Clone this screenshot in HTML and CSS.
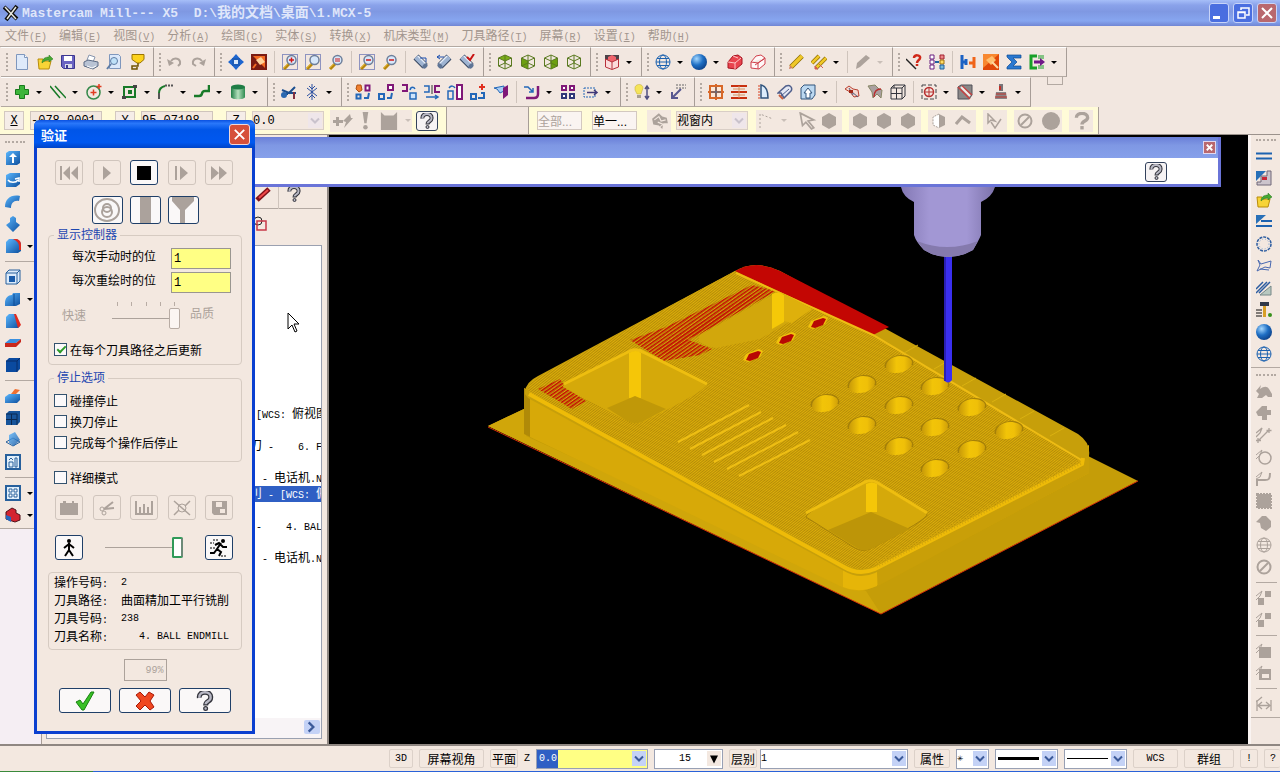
FILE: index.html
```html
<!DOCTYPE html>
<html lang="zh-CN">
<head>
    <meta charset="UTF-8">
    <meta name="viewport" content="width=device-width, initial-scale=1.0">
    <title>Mastercam Mill--- X5</title>
    <link rel="stylesheet" href="styles.css">
</head>
<body>
    <!-- icon sprite -->
    <svg class="sprite" aria-hidden="true">
        <defs>
            <linearGradient id="g-blue" x1="0" y1="0" x2="1" y2="1"><stop offset="0" stop-color="#5cb8ff"/><stop offset="1" stop-color="#0d4f9e"/></linearGradient>
            <linearGradient id="g-green" x1="0" x2="1"><stop offset="0" stop-color="#1f7d45"/><stop offset="0.5" stop-color="#b5e0bd"/><stop offset="1" stop-color="#2e8b50"/></linearGradient>
            <radialGradient id="g-ball" cx="0.35" cy="0.3" r="0.8"><stop offset="0" stop-color="#a5d8ff"/><stop offset="0.5" stop-color="#1f6fc4"/><stop offset="1" stop-color="#0a3a80"/></radialGradient>
            <symbol id="lens" viewBox="0 0 16 16"><path d="M2 15l5-5" stroke="#b8860b" stroke-width="3"/><path d="M1.500 14l5-5" stroke="#f0c850"/><circle cx="9.500" cy="6" r="4.500" fill="#d7e7fa" stroke="#6e7f9a" stroke-width="1.500"/></symbol>
            <symbol id="dots" viewBox="0 0 16 16"><rect x="0.500" y="0.500" width="15" height="15" fill="none" stroke="#2b3fa0" stroke-dasharray="1 1"/></symbol>
            <symbol id="tube" viewBox="0 0 16 16"><path d="M3 3l9 9" stroke="#384862" stroke-width="7"/><path d="M3 3l9 9" stroke="#9fb4d2" stroke-width="5"/><path d="M5 2l8 8" stroke="#e6eefa" stroke-width="1.500"/><ellipse cx="12" cy="12" rx="3" ry="2" transform="rotate(-45 12 12)" fill="#5f7596"/></symbol>
            <symbol id="cube" viewBox="0 0 16 16"><path d="M8 1l6.500 3v8L8 15l-6.500-3V4zM1.500 4L8 7l6.500-3M8 7v8M1.500 12L8 9l6.500 3M8 1v8" fill="none" stroke="#5a7a20"/></symbol>
            <symbol id="i-new" viewBox="0 0 16 16"><path d="M2.500 0.500h8l3 3v12h-11z" fill="#dfeafa" stroke="#7f97bd"/><path d="M10.500 0.500v3h3" fill="#fff" stroke="#7f97bd"/></symbol>
            <symbol id="i-open" viewBox="0 0 16 16"><path d="M1 5h5l1 2h7l-2 8H2z" fill="#f7d437" stroke="#b98c0a"/><path d="M5 9c0-4 3-6 7-6V1l4 4-4 3V6c-3 0-5 1-7 3z" fill="#46a832" stroke="#2b7220" stroke-width="0.500"/></symbol>
            <symbol id="i-save" viewBox="0 0 16 16"><path d="M1.500 1.500h13v13h-11l-2-2z" fill="#6a63c2" stroke="#3c3790"/><path d="M4 2h8v5H4z" fill="#fff"/><path d="M5 10h7v4H5z" fill="#dcdcea"/><path d="M6 11h2v3H6z" fill="#3c3790"/></symbol>
            <symbol id="i-print" viewBox="0 0 16 16"><path d="M4 6l2-5 6 2-2 5z" fill="#fff" stroke="#8795ad"/><path d="M1 8l4-2 10 2v4l-5 3-9-3z" fill="#b9c3d4" stroke="#5c6b85"/><path d="M4 12l5 2 4-2" stroke="#fff" fill="none"/></symbol>
            <symbol id="i-preview" viewBox="0 0 16 16"><path d="M3.500 0.500h9l2 2v12h-11z" fill="#dbe8fa" stroke="#7f97bd"/><circle cx="8" cy="7" r="3.500" fill="#bfe1f8" stroke="#5e7ca5"/><path d="M5 10l-4 5" stroke="#5e7ca5" stroke-width="2"/></symbol>
            <symbol id="i-cup" viewBox="0 0 16 16"><path d="M3 0.500h12v5L11 9H8L3 5.500z" fill="#fcd21c" stroke="#9a7400"/><path d="M9 9v3H3v3h5v-2" fill="none" stroke="#705400" stroke-width="1.500"/></symbol>
            <symbol id="i-undo" viewBox="0 0 16 16"><path d="M4 7c3-4 10-3 9 3l-2 2" fill="none" stroke="currentColor" stroke-width="2"/><path d="M0 5l2 7 5-3z" fill="currentColor"/></symbol>
            <symbol id="i-redo" viewBox="0 0 16 16"><path d="M12 7C9 3 2 4 3 10l3 2" fill="none" stroke="currentColor" stroke-width="2"/><path d="M16 5l-2 7-5-3z" fill="currentColor"/></symbol>
            <symbol id="i-fit" viewBox="0 0 16 16"><path d="M8 0l3.500 4h-7zM8 16l3.500-4h-7zM0 8l4-3.500v7zM16 8l-4-3.500v7z" fill="#1d66d0"/><rect x="5" y="5" width="6" height="6" fill="#d8e8fa" stroke="#1c5cb8" stroke-width="2"/></symbol>
            <symbol id="i-repaint" viewBox="0 0 16 16"><path d="M0 0h16v16H0z" fill="#7a1b12"/><path d="M2 2h12v12z" fill="#f36b23"/><path d="M5 6l5-3 4 5-5 3z" fill="#ffd39a"/><path d="M5 10l-3 4" stroke="#f36b23" stroke-width="2"/></symbol>
            <symbol id="i-zoomwin" viewBox="0 0 16 16"><use href="#dots"/><use href="#lens"/><path d="M9.500 3.500v5M7 6h5" stroke="#d01818" stroke-width="1.500"/></symbol>
            <symbol id="i-zoomtgt" viewBox="0 0 16 16"><use href="#dots"/><use href="#lens"/></symbol>
            <symbol id="i-zoomeq" viewBox="0 0 16 16"><use href="#lens"/><path d="M7 5h5M7 7h5" stroke="#d01818"/></symbol>
            <symbol id="i-zoomoutwin" viewBox="0 0 16 16"><use href="#dots"/><use href="#lens"/><path d="M7 6h5" stroke="#d01818" stroke-width="1.500"/></symbol>
            <symbol id="i-zoomout" viewBox="0 0 16 16"><use href="#lens"/><path d="M7 6h5" stroke="#d01818" stroke-width="1.500"/></symbol>
            <symbol id="i-tube1" viewBox="0 0 16 16"><use href="#tube"/><path d="M7 4h6v4" fill="none" stroke="#1b4fb0"/></symbol>
            <symbol id="i-tube2" viewBox="0 0 16 16"><g transform="matrix(-1 0 0 1 16 0)"><use href="#tube"/></g><path d="M1 3h7M1 3l3-2M1 3l3 2" fill="none" stroke="#1b4fb0"/></symbol>
            <symbol id="i-tube3" viewBox="0 0 16 16"><use href="#tube"/><path d="M8 3l3 3 4-6" fill="none" stroke="#c81414" stroke-width="2"/></symbol>
            <symbol id="i-cubetop" viewBox="0 0 16 16"><path d="M8 1l6.500 3L8 7 1.500 4z" fill="#7cae1a"/><use href="#cube"/></symbol>
            <symbol id="i-cubeleft" viewBox="0 0 16 16"><path d="M1.500 4L8 7v8l-6.500-3z" fill="#6ca010"/><use href="#cube"/></symbol>
            <symbol id="i-cuberight" viewBox="0 0 16 16"><path d="M14.500 4L8 7v8l6.500-3z" fill="#6ca010"/><use href="#cube"/></symbol>
            <symbol id="i-redcube" viewBox="0 0 16 16"><path d="M1 1h14v4L8 8 1 5z" fill="#4c4248"/><path d="M4 3l4-2 4 2v3L8 8 4 6z" fill="#f0646c"/><path d="M1.500 5v8L8 15.500l6.500-2.500V5L8 8zM8 8v7" fill="#fbdcdc" stroke="#b8303a"/></symbol>
            <symbol id="i-globe" viewBox="0 0 16 16"><circle cx="8" cy="8" r="7" fill="none" stroke="currentColor"/><ellipse cx="8" cy="8" rx="3.500" ry="7" fill="none" stroke="currentColor"/><path d="M1 8h14M2 4.500h12M2 11.500h12" stroke="currentColor"/></symbol>
            <symbol id="i-ball" viewBox="0 0 16 16"><circle cx="8" cy="8" r="8" fill="url(#g-ball)"/></symbol>
            <symbol id="i-redsolid" viewBox="0 0 16 16"><path d="M1 8l5-6 5-1 4 3v6l-6 5-8-1z" fill="#e8444e" stroke="#a81420"/><path d="M1 8l7 1 6-5M8 9v6M6 2l5 2" fill="none" stroke="#ffc4c4"/></symbol>
            <symbol id="i-redwire" viewBox="0 0 16 16"><path d="M1 8l5-6 5-1 4 3v6l-6 5-8-1zM1 8l7 1 7-5M8 9v6M5 11l9-6" fill="#fff8f8" stroke="#d0404c"/></symbol>
            <symbol id="i-pencil" viewBox="0 0 16 16"><path d="M3 13L14 2" stroke="#8a6a00" stroke-width="5"/><path d="M3 13L14 2" stroke="#f0c828" stroke-width="3.500"/><path d="M1 15l1-4 3 3z" fill="#d08060"/></symbol>
            <symbol id="i-pencils" viewBox="0 0 16 16"><path d="M1 9l7-7M5 14l10-10" stroke="#8a6a00" stroke-width="4"/><path d="M1 9l7-7M5 14l10-10" stroke="#f0c828" stroke-width="2.500"/><path d="M4 15l0-3 3 3zM8 10l4 4" fill="#d06050" stroke="#d06050"/></symbol>
            <symbol id="i-eraser" viewBox="0 0 16 16"><path d="M1 15l4-2 10-9-4-3-9 8z" fill="currentColor"/></symbol>
            <symbol id="i-what" viewBox="0 0 16 16"><path d="M0 5l10 10" stroke="#222" stroke-width="1.500"/><path d="M8 4c0-4 7-3 6 0 0 2-3 2-3 5M11 10v2" fill="none" stroke="#d02818" stroke-width="2.500"/></symbol>
            <symbol id="i-levels" viewBox="0 0 16 16"><path d="M1 1h4v4H1zM1 6h4v4H1zM1 11h4v4H1z" fill="#fff" stroke="#6b2080"/><path d="M11 1h4v4h-4z" fill="#e88" stroke="#a02030"/><path d="M11 6h4v4h-4z" fill="#fd6" stroke="#a07010"/><path d="M11 11h4v4h-4z" fill="#7bd" stroke="#2060a0"/><path d="M6 8h4" stroke="#2060a0" stroke-width="2"/></symbol>
            <symbol id="i-join" viewBox="0 0 16 16"><path d="M2 1v14M2 8h5M6 5v6" stroke="#1c62c4" stroke-width="3"/><path d="M14 3v11M9 9h5" stroke="#f06418" stroke-width="3"/></symbol>
            <symbol id="i-hammer" viewBox="0 0 16 16"><path d="M0 0h16v16H0z" fill="#e04808"/><path d="M0 0h16L0 14z" fill="#f88830"/><path d="M3 6l6-4 4 4-5 5z" fill="#ffc070"/><path d="M9 8l6 6" stroke="#ffd8a0" stroke-width="2"/></symbol>
            <symbol id="i-sum" viewBox="0 0 16 16"><path d="M1 1h14v3H7l4 4-4 4h8v3H1v-2l5-5-5-5z" fill="#2a78d0" stroke="#0c4a94" stroke-width="0.700"/></symbol>
            <symbol id="i-run" viewBox="0 0 16 16"><path d="M8 2H2v12h6" fill="none" stroke="#18a028" stroke-width="3"/><path d="M10 1v4M12 1v4M14 1v4M10 11v4M12 11v4M14 11v4" stroke="#18a028"/><path d="M5 6.500h6V4l5 4-5 4V9.500H5z" fill="#701888"/></symbol>
            <symbol id="i-plus" viewBox="0 0 16 16"><path d="M5.500 1.500h5v4h4v5h-4v4h-5v-4h-4v-5h4z" fill="#3db53a" stroke="#187a1c"/></symbol>
            <symbol id="i-lines" viewBox="0 0 16 16"><path d="M0 2l10 12M5 2l11 12" stroke="#187a28" stroke-width="1.500"/></symbol>
            <symbol id="i-circle" viewBox="0 0 16 16"><circle cx="7.500" cy="8.500" r="6.500" fill="none" stroke="#35894a" stroke-width="1.500"/><path d="M7.500 5.500v6M4.500 8.500h6M13 0v5M10.500 2.500h5" stroke="#e03c20" stroke-width="1.500"/></symbol>
            <symbol id="i-rect" viewBox="0 0 16 16"><rect x="2" y="3" width="11" height="10" fill="none" stroke="#187a28" stroke-width="2"/><path d="M6 6h4v4H6z" fill="#187a28"/><path d="M0 12h4v3H0zM11 1h4v3h-4z" fill="#444"/></symbol>
            <symbol id="i-fillet" viewBox="0 0 16 16"><path d="M1 15V9" stroke="#555" stroke-width="2"/><path d="M1 9c0-4 2-6 6-7" fill="none" stroke="#187a28" stroke-width="2"/><path d="M7 1.500h9" stroke="#555" stroke-dasharray="2 1" stroke-width="2"/></symbol>
            <symbol id="i-spline" viewBox="0 0 16 16"><path d="M0 12h5c5 0 1-5 6-5h4V1" fill="none" stroke="#187a28" stroke-width="2.500"/></symbol>
            <symbol id="i-cyl" viewBox="0 0 16 16"><path d="M1 3v10c0 3 14 3 14 0V3z" fill="url(#g-green)"/><ellipse cx="8" cy="3" rx="7" ry="2.500" fill="#1f7d45"/></symbol>
            <symbol id="i-trim" viewBox="0 0 16 16"><path d="M1 6l7 3 6-6M8 9l7 0M2 10l5 0" stroke="#1b4f90" stroke-width="2" fill="none"/><circle cx="3" cy="11" r="3" fill="#2a68b0"/><path d="M13 8v7" stroke="#803040" stroke-width="2"/></symbol>
            <symbol id="i-break" viewBox="0 0 16 16"><path d="M8 0v16M3 4l10 8M13 4L3 12M5 2l3 3 3-3M5 14l3-3 3 3" stroke="#2a4fa0" fill="none"/></symbol>
            <symbol id="i-x1" viewBox="0 0 16 16"><path d="M2 1l4 0 1 5-3 2-3-3z" fill="#f08030" stroke="#b05010"/><path d="M10.500 1.500h4v5h-4z" fill="#fff" stroke="#801878" stroke-width="2"/><path d="M1.500 10.500h4v4h-4zM9 14h4l1-5" fill="none" stroke="#2468b8" stroke-width="2"/></symbol>
            <symbol id="i-x2" viewBox="0 0 16 16"><path d="M10 1h5v5h-5z" fill="#fff" stroke="#801878" stroke-width="2"/><path d="M1 10h5v5H1zM9 14h4l1-5" fill="none" stroke="#2468b8" stroke-width="2"/></symbol>
            <symbol id="i-x3" viewBox="0 0 16 16"><path d="M1 1h5v6H1" fill="none" stroke="#801878" stroke-width="2"/><path d="M9 9h6v6H9zM9 6c1-4 4-3 5-1" fill="#cfe4fb" stroke="#2468b8" stroke-width="1.500"/></symbol>
            <symbol id="i-x4" viewBox="0 0 16 16"><path d="M0 2h5v6H0M2 13h12M11 11l3 2-3 2" fill="none" stroke="#2468b8" stroke-width="1.500"/><path d="M8 1v9" stroke="#333"/><path d="M16 2h-5v6h5" fill="none" stroke="#801878" stroke-width="2"/></symbol>
            <symbol id="i-x5" viewBox="0 0 16 16"><path d="M1 7h5v8H1zM2 4c2-3 5-2 6 0" fill="none" stroke="#2468b8" stroke-width="1.500"/><path d="M10 1h5v14h-5z" fill="#fff" stroke="#801878" stroke-width="2"/></symbol>
            <symbol id="i-x6" viewBox="0 0 16 16"><path d="M1 10h5v5H1zM8 14h6V9h-3" fill="none" stroke="#2468b8" stroke-width="2"/><path d="M12 0v6M9 3h6" stroke="#e03020" stroke-width="2"/></symbol>
            <symbol id="i-x7" viewBox="0 0 16 16"><path d="M1 4l10-2v5L7 9l-3-4z" fill="#a8ccf4" stroke="#2468b8"/><path d="M10 4l5-3v10l-5 4z" fill="#801878"/></symbol>
            <symbol id="i-offset" viewBox="0 0 16 16"><path d="M2 14h8q4 0 4-4V2" fill="none" stroke="#801878" stroke-width="2.500"/><path d="M0 3h4l5 5M9 4v4H5" fill="none" stroke="#2468b8" stroke-width="1.500"/></symbol>
            <symbol id="i-array" viewBox="0 0 16 16"><path d="M2 2h4v4H2zM10 2h4v4h-4z" fill="#fff" stroke="#801878" stroke-width="2"/><path d="M2 10h4v4H2zM10 10h4v4h-4z" fill="#fff" stroke="#303878" stroke-width="2"/></symbol>
            <symbol id="i-stretch" viewBox="0 0 16 16"><path d="M1 4h11v9H1z" fill="none" stroke="#2468b8" stroke-dasharray="2 1"/><path d="M4 8.500h9M11 6l3 2.500-3 2.500" fill="none" stroke="#403878" stroke-width="1.500"/></symbol>
            <symbol id="i-bulb" viewBox="0 0 16 16"><path d="M1 3c2-4 8-3 8 1L7 10H3L1 6z" fill="#f5e45a" stroke="#c0a830" stroke-width="0.500"/><path d="M3 11h4v3H3z" fill="#a8a090"/><path d="M13 3v11M11 5l2-3 2 3M11 12l2 3 2-3" fill="none" stroke="#505080" stroke-width="1.500"/></symbol>
            <symbol id="i-note" viewBox="0 0 16 16"><path d="M6 1h10M6 4h10" stroke="#666" stroke-dasharray="2 1"/><path d="M11 5l-8 8M2 8v6h6" fill="none" stroke="#585890" stroke-width="2"/></symbol>
            <symbol id="i-mesh" viewBox="0 0 16 16"><path d="M2 2h12v12H2zM8 0v16M0 8h16" fill="#fbe8d8" stroke="#d86828" stroke-width="2"/><path d="M8 3v10M3 8h10" stroke="#406890"/></symbol>
            <symbol id="i-rule" viewBox="0 0 16 16"><path d="M0 2h16M0 8h16M0 14h16" stroke="#c83010" stroke-width="2"/><path d="M2 5h12M2 11h12M8 2v12" stroke="#d89060"/></symbol>
            <symbol id="i-fan" viewBox="0 0 16 16"><path d="M5 1v14" stroke="#d84020" stroke-dasharray="2 1"/><path d="M7 1c5 1 7 7 7 13H7z" fill="#dcecfb" stroke="#31547c" stroke-width="1.500"/></symbol>
            <symbol id="i-sweep" viewBox="0 0 16 16"><path d="M1 9l8-7c4-2 7 2 5 5l-7 7-3-5z" fill="#e4e8f4" stroke="#51608c" stroke-width="1.500"/><path d="M4 12l8-7" stroke="#51608c"/><path d="M2 11l4 4" stroke="#c86040" stroke-width="2"/></symbol>
            <symbol id="i-box" viewBox="0 0 16 16"><path d="M1 4l3-3h11v10l-3 4H1z" fill="#bcd8f0" stroke="#31547c"/><path d="M6 14V9H4l4-5 4 5h-2v5z" fill="#fff" stroke="#31547c"/></symbol>
            <symbol id="i-leaf" viewBox="0 0 16 16"><path d="M1 5l4-3 4 3 5 1 1 6-5 1-4-5z" fill="#f4d8d0" stroke="#b84030"/><path d="M5 4l4 7M8 8l6 5" stroke="#505878"/><path d="M5 6h4v3H5z" fill="#a02818"/></symbol>
            <symbol id="i-leaf2" viewBox="0 0 16 16"><path d="M1 2l7-1 4 4 3 1-1 8-4-4-4 4-1-6z" fill="#aaa0a0" stroke="#886"/><path d="M7 13c0-5 2-8 7-8" fill="none" stroke="#b83030" stroke-width="1.500"/></symbol>
            <symbol id="i-wirebox" viewBox="0 0 16 16"><path d="M1 4h11v11H1zM4 1h11v11M1 4l3-3M12 4l3-3M12 15l3-3M6.500 4v11M1 9.500h11M4 1v3" fill="none" stroke="#33343c"/></symbol>
            <symbol id="i-target" viewBox="0 0 16 16"><rect x="1" y="1" width="14" height="14" fill="none" stroke="#454548" stroke-dasharray="4 2"/><circle cx="8" cy="8" r="4.500" fill="none" stroke="#b83030" stroke-width="1.500"/><path d="M8 3v10M3 8h10" stroke="#b83030"/></symbol>
            <symbol id="i-block" viewBox="0 0 16 16"><path d="M1 3l3-2h11v10l-3 4H1z" fill="#8a8888" stroke="#505058"/><path d="M1 3l12 12M5 2l10 9" stroke="#c84040" stroke-width="1.500"/><path d="M4 3l9 9" stroke="#f4ece8" stroke-width="2"/></symbol>
            <symbol id="i-stamp" viewBox="0 0 16 16"><path d="M6 0h4v7H6z" fill="#787478"/><path d="M7 2v4" stroke="#c03028" stroke-width="2"/><path d="M3 8h10l1 7H2z" fill="#8a8688"/><path d="M3 10h10M2 13h12" stroke="#c03028"/></symbol>
            <symbol id="i-blob" viewBox="0 0 16 16"><path d="M1 4l7-4 7 4v8l-7 4-7-4z" fill="currentColor"/></symbol>
            <symbol id="i-disc" viewBox="0 0 20 20"><circle cx="10" cy="10" r="10" fill="currentColor"/></symbol>
            <symbol id="i-no" viewBox="0 0 16 16"><circle cx="8" cy="8" r="6.500" fill="none" stroke="currentColor" stroke-width="2"/><path d="M4 12l8-8" stroke="currentColor" stroke-width="2"/></symbol>
            <symbol id="i-flash" viewBox="0 0 20 16"><path d="M0 7h3V4h3v3h4v3H6v3H3v-3H0z" fill="currentColor"/><path d="M10 8l7-7 1 4h2l-9 10 2-6z" fill="currentColor"/></symbol>
            <symbol id="i-bang" viewBox="0 0 16 16"><path d="M5 0h5L8.500 10h-2z" fill="currentColor"/><circle cx="7.500" cy="13.500" r="2" fill="currentColor"/></symbol>
            <symbol id="i-cat" viewBox="0 0 20 20"><path d="M1 0l4 4h10l4-4v20H1z" fill="currentColor"/></symbol>
            <symbol id="i-help" viewBox="0 0 16 16"><path d="M3.500 5.500c-1-6 10-6 9 0 0 3-4 2.500-4 6" fill="none" stroke="#33343c" stroke-width="4"/><path d="M3.500 5.500c-1-6 10-6 9 0 0 3-4 2.500-4 5" fill="none" stroke="#b8b8c4" stroke-width="2"/><circle cx="8.500" cy="14" r="1.500" fill="#b8b8c4" stroke="#33343c"/></symbol>
            <symbol id="i-helpgray" viewBox="0 0 16 16"><path d="M3 5c0-5 10-5 10 0 0 3-5 3-5 6" fill="none" stroke="currentColor" stroke-width="3"/><path d="M6.500 12.500h3v3h-3z" fill="currentColor"/></symbol>
            <symbol id="i-scribble" viewBox="0 0 16 16"><path d="M1 6l6-5 3 3 4 1 1 5-4 0-1 5-3-3-5-1z" fill="currentColor"/><path d="M3 7l4-3 2 4 4-1M6 9l5 2-3 2" fill="none" stroke="#f3e8e0"/></symbol>
            <symbol id="i-pick" viewBox="0 0 16 16"><path d="M2 1l12 6-5 1 5 6-2 1-5-6-3 3z" fill="none" stroke="currentColor" stroke-width="1.500"/></symbol>
            <symbol id="i-dash" viewBox="0 0 16 16"><path d="M1 15V1l13 5" fill="none" stroke="currentColor" stroke-dasharray="2 2"/></symbol>
            <symbol id="i-halfcube" viewBox="0 0 16 16"><path d="M8 1l6 3v8l-6 3z" fill="currentColor"/><path d="M8 1L2 4v8l6 3" fill="#fff" stroke="currentColor" stroke-dasharray="2 1"/></symbol>
            <symbol id="i-caret" viewBox="0 0 16 16"><path d="M1 11l6-7 8 6" fill="none" stroke="currentColor" stroke-width="3"/></symbol>
            <symbol id="i-pickcheck" viewBox="0 0 16 16"><path d="M2 1v9l3-3 4 1zM5 9l4 6 6-9" fill="none" stroke="currentColor" stroke-width="1.500"/></symbol>
            <!-- solids bar -->
            <symbol id="s-extrude" viewBox="0 0 16 16"><path d="M1 3l3-2h11v12l-3 2H1z" fill="url(#g-blue)"/><path d="M7 13V7H4l4-4 4 4H9v6z" fill="#fff"/></symbol>
            <symbol id="s-revolve" viewBox="0 0 16 16"><path d="M1 3l4-2h10v11l-4 3H1z" fill="url(#g-blue)"/><path d="M3 8c2 3 8 3 10 0M10 7l4-1v4" fill="none" stroke="#fff" stroke-width="1.500"/></symbol>
            <symbol id="s-sweep" viewBox="0 0 16 16"><path d="M0 13C0 5 6 0 15 2l-1 5c-5-1-8 2-8 7z" fill="url(#g-blue)"/></symbol>
            <symbol id="s-loft" viewBox="0 0 16 16"><path d="M8 0l3 2v4l4 3-7 7-7-7 4-3V2z" fill="url(#g-blue)"/></symbol>
            <symbol id="s-fillet" viewBox="0 0 16 16"><path d="M1 4l3-3h8l4 4v8l-3 2H1z" fill="url(#g-blue)"/><path d="M8 1h4c3 1 4 3 4 6v5h-2V8c0-3-2-5-6-7z" fill="#e02c20"/></symbol>
            <symbol id="s-shell" viewBox="0 0 16 16"><path d="M1 4h11v11H1zM1 4l3-3h11v11l-3 3M12 4l3-3" fill="#dcebfa" stroke="#28609c"/><path d="M4 7h6v6H4z" fill="#1a5caa"/></symbol>
            <symbol id="s-bool" viewBox="0 0 16 16"><path d="M0 12c0-5 3-8 7-8l1-2h7v11l-4 2H0z" fill="url(#g-blue)"/><path d="M9 3v12" stroke="#0c4a94"/></symbol>
            <symbol id="s-draft" viewBox="0 0 16 16"><path d="M1 4l3-3h6l5 12-2 2H1z" fill="url(#g-blue)"/><path d="M9 1h2l5 11-3 3z" fill="#e02c20"/></symbol>
            <symbol id="s-thick" viewBox="0 0 16 16"><path d="M0 8l5-4h11l-5 4z" fill="#3a90e0"/><path d="M0 8h11l5-4v3l-5 5H0z" fill="#c8281c"/></symbol>
            <symbol id="s-solid" viewBox="0 0 16 16"><path d="M1 4l3-3h11v11l-3 3H1z" fill="#0a4aa0"/><path d="M1 4h11v11M12 4l3-3" fill="none" stroke="#082c68"/></symbol>
            <symbol id="s-remove" viewBox="0 0 16 16"><path d="M0 9l4-3h11v6l-3 3H0z" fill="url(#g-blue)"/><path d="M6 6l4-5 5 1-4 4z" fill="#f07030"/></symbol>
            <symbol id="s-grid" viewBox="0 0 16 16"><path d="M1 4l3-3h11v11l-3 3H1z" fill="#17549a"/><path d="M6.500 4v11M1 9.500h11M12 4v11M1 4h11" stroke="#0a2850"/></symbol>
            <symbol id="s-drop" viewBox="0 0 16 16"><path d="M1 10l7-4 7 4-7 4z" fill="none" stroke="#28609c"/><path d="M4 3l6-3 5 8-6 6-5-3z" fill="url(#g-blue)" opacity="0.800"/></symbol>
            <symbol id="s-layout" viewBox="0 0 16 16"><path d="M1 1h14v14H1z" fill="#e2effa" stroke="#28609c" stroke-width="2"/><path d="M4 8h4v5H4zM4 6l2-2 2 2M10 4h2v9h-2z" fill="none" stroke="#28609c"/></symbol>
            <symbol id="s-tiles" viewBox="0 0 16 16"><path d="M1 1h14v14H1z" fill="#e2effa" stroke="#28609c" stroke-width="2"/><path d="M4 4h3v3H4zM9 4h3v3H9zM4 9h3v3H4zM9 9h3v3H9z" fill="#fff" stroke="#28609c"/></symbol>
            <symbol id="s-mixed" viewBox="0 0 16 16"><path d="M1 5l6-4 4 2v3l4 2v5l-5 2-9-3z" fill="#d42430" stroke="#501018"/><path d="M1 8l5 2v5l-5-3z" fill="#2468c0"/></symbol>
            <!-- view bar -->
            <symbol id="r-eq" viewBox="0 0 16 16"><path d="M0 5.500h16M0 10.500h16" stroke="#1c62b0" stroke-width="2"/></symbol>
            <symbol id="r-cut" viewBox="0 0 16 16"><path d="M0 1h10L0 11z" fill="#2870b8"/><path d="M5 6h6V1h4v14H1v-3h4z" fill="#ccc4cc" stroke="#706878"/><path d="M6 7h5v3H6z" fill="#c82838"/></symbol>
            <symbol id="r-step" viewBox="0 0 16 16"><path d="M0 1h10L0 10z" fill="#2870b8"/><path d="M5 7h11M0 12h16" stroke="#1c62b0" stroke-width="2"/></symbol>
            <symbol id="r-ring" viewBox="0 0 16 16"><circle cx="8" cy="8" r="7" fill="none" stroke="#2c5ca0" stroke-width="1.500" stroke-dasharray="3 1"/><circle cx="8" cy="8" r="5" fill="none" stroke="#88a8d4" stroke-dasharray="1 2"/></symbol>
            <symbol id="r-flow" viewBox="0 0 16 16"><path d="M2 2l3 4 10-3-1 7-5-1-8 4 3-6zM4 11l9 1" fill="none" stroke="#4868b0"/></symbol>
            <symbol id="r-ramp" viewBox="0 0 16 16"><path d="M4 15L15 6v9z" fill="#b8c8c0" stroke="#788"/><path d="M0 9l7-7M0 13L11 2M3 13L14 2" stroke="#2c5ca0" stroke-width="1.500"/></symbol>
            <symbol id="r-tool" viewBox="0 0 16 16"><path d="M4 0h9v4H4z" fill="#303848"/><path d="M7 4h3v11H7z" fill="#d8a028"/><path d="M0 8h6M0 11h6M0 14h6" stroke="#111"/><circle cx="14" cy="13" r="2" fill="#38901c"/></symbol>
            <symbol id="q-a" viewBox="0 0 16 16"><path d="M0 8l5-6-1 4c4-3 7-3 9 0l3 5v3h-4l-2-2-4 3-5 0 2-4z" fill="currentColor"/></symbol>
            <symbol id="q-b" viewBox="0 0 16 16"><path d="M0 7l6-6 5 0v4h4v5h-4v5H6v-4H2z" fill="currentColor"/></symbol>
            <symbol id="q-c" viewBox="0 0 16 16"><path d="M0 6l6-5-2 5-4 4M3 13l9-9M13 1v5M10.500 3.500h5M2 11v5M0 13.500h5" fill="none" stroke="currentColor" stroke-width="1.300"/></symbol>
            <symbol id="q-d" viewBox="0 0 16 16"><circle cx="9" cy="9" r="6" fill="none" stroke="currentColor" stroke-width="1.500"/><path d="M0 6l6-5-2 5-4 4" fill="none" stroke="currentColor"/></symbol>
            <symbol id="q-e" viewBox="0 0 16 16"><path d="M1 15V9h8c4 0 5-1 5-7" fill="none" stroke="currentColor" stroke-width="2"/><path d="M0 6l6-5-2 5-4 2" fill="none" stroke="currentColor"/></symbol>
            <symbol id="q-f" viewBox="0 0 16 16"><path d="M1 1h14v14H1z" fill="currentColor" stroke="currentColor" stroke-width="2" stroke-dasharray="2 1"/></symbol>
            <symbol id="q-g" viewBox="0 0 16 16"><path d="M0 7l6-6 4 0 5 5v6l-5 4-5-3-1-5z" fill="currentColor"/></symbol>
            <symbol id="q-h" viewBox="0 0 16 16"><path d="M9 1h6v6H9zM2 8h6v7H2z" fill="currentColor"/><path d="M0 6l6-5-2 5-4 4" fill="none" stroke="currentColor"/></symbol>
            <symbol id="q-i" viewBox="0 0 16 16"><path d="M3 4h12v11H3z" fill="currentColor"/><path d="M0 6l6-5-2 5-4 4" fill="none" stroke="currentColor"/></symbol>
            <symbol id="q-j" viewBox="0 0 16 16"><path d="M3 4h12v11H3z" fill="currentColor"/><path d="M6 9h7v4H6z" fill="#f3e8e0"/><path d="M0 6l6-5-2 5-4 4" fill="none" stroke="currentColor"/></symbol>
            <symbol id="q-k" viewBox="0 0 16 16"><path d="M1 4v11M15 4v11M3 9.500h10M6 6L2 9.500 6 13M10 6l4 3.500L10 13M0 6l6-5" fill="none" stroke="currentColor" stroke-width="1.300"/></symbol>
        </defs>
    </svg>

    <header class="title-bar">
        <svg class="app-icon" viewBox="0 0 16 16"><path d="M1 2l13 12M14 1L3 15" stroke="#111" stroke-width="4"/><path d="M2 2l11 12M13 2L4 14" stroke="#e8e8e0" stroke-width="1.500"/></svg>
        <h1>Mastercam Mill--- X5&nbsp; D:\<span class="cn">我的文档</span>\<span class="cn">桌面</span>\1.MCX-5</h1>
        <div class="window-buttons">
            <button aria-label="最小化"><svg viewBox="0 0 16 16"><path d="M2 11h7v3H2z" fill="#fff"/></svg></button>
            <button aria-label="还原"><svg viewBox="0 0 16 16"><path d="M6 5V3h8v7h-3M3 7h7v6H3zM3 7.500h7" fill="none" stroke="#fff" stroke-width="1.500"/></svg></button>
            <button class="close" aria-label="关闭"><svg viewBox="0 0 16 16"><path d="M3 3l10 10M13 3L3 13" stroke="#fff" stroke-width="2"/></svg></button>
        </div>
    </header>

    <nav class="menu-bar">
        <a href="#">文件<span class="en">(<u>F</u>)</span></a>
        <a href="#">编辑<span class="en">(<u>E</u>)</span></a>
        <a href="#">视图<span class="en">(<u>V</u>)</span></a>
        <a href="#">分析<span class="en">(<u>A</u>)</span></a>
        <a href="#">绘图<span class="en">(<u>C</u>)</span></a>
        <a href="#">实体<span class="en">(<u>S</u>)</span></a>
        <a href="#">转换<span class="en">(<u>X</u>)</span></a>
        <a href="#">机床类型<span class="en">(<u>M</u>)</span></a>
        <a href="#">刀具路径<span class="en">(<u>T</u>)</span></a>
        <a href="#">屏幕<span class="en">(<u>R</u>)</span></a>
        <a href="#">设置<span class="en">(<u>I</u>)</span></a>
        <a href="#">帮助<span class="en">(<u>H</u>)</span></a>
    </nav>

    <div class="tool-row">
        <div class="bar">
            <button class="tool" aria-label="新建"><svg><use href="#i-new"/></svg></button>
            <button class="tool" aria-label="打开"><svg><use href="#i-open"/></svg></button>
            <button class="tool" aria-label="保存"><svg><use href="#i-save"/></svg></button>
            <button class="tool" aria-label="打印"><svg><use href="#i-print"/></svg></button>
            <button class="tool" aria-label="预览"><svg><use href="#i-preview"/></svg></button>
            <button class="tool" aria-label="转换文件"><svg><use href="#i-cup"/></svg></button>
        </div>
        <div class="bar">
            <button class="tool off" aria-label="撤销"><svg><use href="#i-undo"/></svg></button>
            <button class="tool off" aria-label="重做"><svg><use href="#i-redo"/></svg></button>
        </div>
        <div class="bar">
            <button class="tool" aria-label="适度化"><svg><use href="#i-fit"/></svg></button>
            <button class="tool" aria-label="重画"><svg><use href="#i-repaint"/></svg></button>
            <span class="sep"></span>
            <button class="tool" aria-label="视窗放大"><svg><use href="#i-zoomwin"/></svg></button>
            <button class="tool" aria-label="目标放大"><svg><use href="#i-zoomtgt"/></svg></button>
            <button class="tool" aria-label="上次缩放"><svg><use href="#i-zoomeq"/></svg></button>
            <span class="sep"></span>
            <button class="tool" aria-label="缩小"><svg><use href="#i-zoomoutwin"/></svg></button>
            <button class="tool" aria-label="缩小一半"><svg><use href="#i-zoomout"/></svg></button>
            <span class="sep"></span>
            <button class="tool" aria-label="动态旋转"><svg><use href="#i-tube1"/></svg></button>
            <button class="tool" aria-label="上一视角"><svg><use href="#i-tube2"/></svg></button>
            <button class="tool" aria-label="指定视角"><svg><use href="#i-tube3"/></svg></button>
        </div>
        <div class="bar">
            <button class="tool" aria-label="俯视图"><svg><use href="#i-cubetop"/></svg></button>
            <button class="tool" aria-label="前视图"><svg><use href="#i-cubeleft"/></svg></button>
            <button class="tool" aria-label="右视图"><svg><use href="#i-cuberight"/></svg></button>
            <button class="tool" aria-label="等角视图"><svg><use href="#cube"/></svg></button>
        </div>
        <div class="bar">
            <button class="tool drop" aria-label="构图面"><svg><use href="#i-redcube"/></svg></button>
        </div>
        <div class="bar">
            <button class="tool drop blue" aria-label="线框"><svg><use href="#i-globe"/></svg></button>
            <button class="tool drop" aria-label="着色"><svg><use href="#i-ball"/></svg></button>
            <button class="tool" aria-label="实体着色"><svg><use href="#i-redsolid"/></svg></button>
            <button class="tool" aria-label="实体线框"><svg><use href="#i-redwire"/></svg></button>
        </div>
        <div class="bar">
            <button class="tool" aria-label="删除图素"><svg><use href="#i-pencil"/></svg></button>
            <button class="tool drop" aria-label="删除重复"><svg><use href="#i-pencils"/></svg></button>
            <span class="sep"></span>
            <button class="tool drop off" aria-label="恢复删除"><svg><use href="#i-eraser"/></svg></button>
        </div>
        <div class="bar">
            <button class="tool" aria-label="分析图素"><svg><use href="#i-what"/></svg></button>
            <button class="tool" aria-label="属性修改"><svg><use href="#i-levels"/></svg></button>
            <span class="sep"></span>
            <button class="tool" aria-label="串连"><svg><use href="#i-join"/></svg></button>
            <button class="tool" aria-label="参数"><svg><use href="#i-hammer"/></svg></button>
            <button class="tool" aria-label="统计"><svg><use href="#i-sum"/></svg></button>
            <button class="tool drop" aria-label="运行"><svg><use href="#i-run"/></svg></button>
        </div>
    </div>

    <div class="tool-row">
        <div class="bar">
            <button class="tool drop" aria-label="绘点"><svg><use href="#i-plus"/></svg></button>
            <button class="tool drop" aria-label="绘线"><svg><use href="#i-lines"/></svg></button>
            <button class="tool drop" aria-label="绘圆"><svg><use href="#i-circle"/></svg></button>
            <button class="tool drop" aria-label="矩形"><svg><use href="#i-rect"/></svg></button>
            <button class="tool drop" aria-label="倒圆角"><svg><use href="#i-fillet"/></svg></button>
            <button class="tool drop" aria-label="曲线"><svg><use href="#i-spline"/></svg></button>
            <button class="tool drop" aria-label="圆柱"><svg><use href="#i-cyl"/></svg></button>
        </div>
        <div class="bar">
            <button class="tool" aria-label="修剪"><svg><use href="#i-trim"/></svg></button>
            <button class="tool drop" aria-label="打断"><svg><use href="#i-break"/></svg></button>
        </div>
        <div class="bar">
            <button class="tool" aria-label="动态平移"><svg><use href="#i-x1"/></svg></button>
            <button class="tool" aria-label="平移"><svg><use href="#i-x2"/></svg></button>
            <button class="tool" aria-label="3D平移"><svg><use href="#i-x3"/></svg></button>
            <button class="tool" aria-label="镜像"><svg><use href="#i-x4"/></svg></button>
            <button class="tool" aria-label="旋转"><svg><use href="#i-x5"/></svg></button>
            <button class="tool" aria-label="比例缩放"><svg><use href="#i-x6"/></svg></button>
            <button class="tool" aria-label="投影"><svg><use href="#i-x7"/></svg></button>
            <span class="sep"></span>
            <button class="tool drop" aria-label="补正"><svg><use href="#i-offset"/></svg></button>
            <button class="tool" aria-label="阵列"><svg><use href="#i-array"/></svg></button>
            <button class="tool drop" aria-label="拖曳"><svg><use href="#i-stretch"/></svg></button>
        </div>
        <div class="bar">
            <button class="tool drop" aria-label="标注"><svg><use href="#i-bulb"/></svg></button>
            <button class="tool" aria-label="引导线"><svg><use href="#i-note"/></svg></button>
        </div>
        <div class="bar">
            <button class="tool" aria-label="网状曲面"><svg><use href="#i-mesh"/></svg></button>
            <button class="tool" aria-label="直纹曲面"><svg><use href="#i-rule"/></svg></button>
            <button class="tool" aria-label="旋转曲面"><svg><use href="#i-fan"/></svg></button>
            <button class="tool" aria-label="扫描曲面"><svg><use href="#i-sweep"/></svg></button>
            <button class="tool drop" aria-label="牵引曲面"><svg><use href="#i-box"/></svg></button>
            <span class="sep"></span>
            <button class="tool" aria-label="修剪曲面"><svg><use href="#i-leaf"/></svg></button>
            <button class="tool" aria-label="曲面延伸"><svg><use href="#i-leaf2"/></svg></button>
            <button class="tool" aria-label="边界盒"><svg><use href="#i-wirebox"/></svg></button>
            <span class="sep"></span>
            <button class="tool drop" aria-label="填补孔"><svg><use href="#i-target"/></svg></button>
            <button class="tool drop" aria-label="分割曲面"><svg><use href="#i-block"/></svg></button>
            <button class="tool drop" aria-label="曲面熔接"><svg><use href="#i-stamp"/></svg></button>
        </div>
        <span class="stub"></span>
    </div>

    <div class="ribbon-row">
        <div class="ribbon coords">
            <button class="axis">X</button>
            <input class="coord" aria-label="X" value="-078.0001">
            <button class="axis">Y</button>
            <input class="coord" aria-label="Y" value="95.07198">
            <button class="axis">Z</button>
            <span class="combo coord-z"><input aria-label="Z" value="0.0"><svg viewBox="0 0 12 12"><path d="M2 4l4 4 4-4" fill="none" stroke="currentColor" stroke-width="2"/></svg></span>
            <button class="tool off" aria-label="快速绘点"><svg class="wide"><use href="#i-flash"/></svg></button>
            <button class="tool off" aria-label="自动抓点"><svg class="wide"><use href="#i-bang"/></svg></button>
            <button class="tool drop off" aria-label="抓点方式"><svg class="wide"><use href="#i-cat"/></svg></button>
            <button class="help-btn" aria-label="帮助"><svg><use href="#i-help"/></svg></button>
        </div>
        <span class="ribbon-gap"></span>
        <div class="ribbon select">
            <button class="pick off">全部...</button>
            <button class="pick">单一...</button>
            <button class="tool off" aria-label="串连选择"><svg class="wide"><use href="#i-scribble"/></svg></button>
            <span class="combo window-mode"><select aria-label="选择方式"><option>视窗内</option></select><svg viewBox="0 0 12 12"><path d="M2 4l4 4 4-4" fill="none" stroke="currentColor" stroke-width="2"/></svg></span>
            <span class="chunk">
                <button class="tool drop off" aria-label="多边形"><svg><use href="#i-dash"/></svg></button>
                <button class="tool off" aria-label="标准选择"><svg class="wide"><use href="#i-pick"/></svg></button>
                <button class="tool off" aria-label="实体选择"><svg><use href="#i-blob"/></svg></button>
            </span>
            <span class="chunk">
                <button class="tool off" aria-label="选择边"><svg><use href="#i-blob"/></svg></button>
                <button class="tool off" aria-label="选择面"><svg><use href="#i-blob"/></svg></button>
                <button class="tool off" aria-label="选择实体"><svg><use href="#i-blob"/></svg></button>
            </span>
            <span class="chunk">
                <button class="tool off" aria-label="背面"><svg><use href="#i-halfcube"/></svg></button>
                <button class="tool off" aria-label="上次选择"><svg><use href="#i-caret"/></svg></button>
            </span>
            <span class="chunk">
                <button class="tool off" aria-label="验证选择"><svg><use href="#i-pickcheck"/></svg></button>
            </span>
            <span class="chunk">
                <button class="tool off" aria-label="取消选择"><svg><use href="#i-no"/></svg></button>
                <button class="tool off" aria-label="结束选择"><svg class="wide"><use href="#i-disc"/></svg></button>
            </span>
            <button class="tool off" aria-label="选择帮助"><svg class="wide"><use href="#i-helpgray"/></svg></button>
        </div>
    </div>

    <main class="workspace">
        <aside class="side-left">
            <div class="side-bar">
                <span class="grip"></span>
                <button class="tool" aria-label="挤出"><svg><use href="#s-extrude"/></svg></button>
                <button class="tool" aria-label="旋转实体"><svg><use href="#s-revolve"/></svg></button>
                <button class="tool" aria-label="扫描实体"><svg><use href="#s-sweep"/></svg></button>
                <button class="tool" aria-label="举升"><svg><use href="#s-loft"/></svg></button>
                <button class="tool drop" aria-label="倒圆角"><svg><use href="#s-fillet"/></svg></button>
                <span class="hsep"></span>
                <button class="tool" aria-label="抽壳"><svg><use href="#s-shell"/></svg></button>
                <button class="tool drop" aria-label="布林运算"><svg><use href="#s-bool"/></svg></button>
                <button class="tool" aria-label="牵引面"><svg><use href="#s-draft"/></svg></button>
                <button class="tool" aria-label="加厚"><svg><use href="#s-thick"/></svg></button>
                <button class="tool" aria-label="由曲面生成"><svg><use href="#s-solid"/></svg></button>
                <span class="hsep"></span>
                <button class="tool" aria-label="移除面"><svg><use href="#s-remove"/></svg></button>
                <button class="tool" aria-label="网格"><svg><use href="#s-grid"/></svg></button>
                <button class="tool" aria-label="修剪实体"><svg><use href="#s-drop"/></svg></button>
                <button class="tool" aria-label="工程图"><svg><use href="#s-layout"/></svg></button>
                <span class="hsep"></span>
                <button class="tool drop" aria-label="视图布局"><svg><use href="#s-tiles"/></svg></button>
                <button class="tool drop" aria-label="识别特征"><svg><use href="#s-mixed"/></svg></button>
            </div>
        </aside>

        <section class="manager">
            <div class="manager-tools">
                <button class="tool" aria-label="锁定"><svg viewBox="0 0 16 16"><path d="M2 14L14 3" stroke="#801018" stroke-width="5"/><path d="M4 12L13 4" stroke="#f04848" stroke-width="2"/></svg></button>
                <span class="sep"></span>
                <button class="tool" aria-label="帮助"><svg><use href="#i-help"/></svg></button>
            </div>
            <div class="manager-tools second">
                <button class="tool" aria-label="显示"><svg viewBox="0 0 16 16"><circle cx="7" cy="5" r="4" fill="none" stroke="#222"/><path d="M6 5h9v9H6z" fill="none" stroke="#c83848" stroke-width="1.500"/></svg></button>
            </div>
            <div class="tree">
                <ul>
                    <li><span class="en"> [WCS: </span>俯视图</li>
                    <li></li>
                    <li>刀<span class="en"> -    6. F</span></li>
                    <li></li>
                    <li><span class="en">: - </span>电话机<span class="en">.N</span></li>
                    <li class="selected">刂<span class="en"> - [WCS: </span>俯</li>
                    <li></li>
                    <li><span class="en"> -    4. BAL</span></li>
                    <li></li>
                    <li><span class="en">: - </span>电话机<span class="en">.N</span></li>
                </ul>
                <div class="scroll-row"><button aria-label="向右"><svg viewBox="0 0 12 12"><path d="M4 2l4 4-4 4" fill="none" stroke="#3b5a9a" stroke-width="2"/></svg></button></div>
            </div>
        </section>

        <section class="viewport">
            <svg class="scene" viewBox="329 135 919 609" preserveAspectRatio="xMidYMid slice" role="img" aria-label="刀具路径模拟">
                <defs>
                    <pattern id="cuts" width="10" height="2" patternUnits="userSpaceOnUse" patternTransform="rotate(-39)"><path d="M0 0h10v2H0z" fill="#ddae0a"/><path d="M0 0h10v1H0z" fill="#b48c08"/></pattern>
                    <pattern id="redcuts" width="10" height="3" patternUnits="userSpaceOnUse" patternTransform="rotate(-35)"><path d="M0 0h10v1.500H0z" fill="#c40a04"/></pattern>
                    <linearGradient id="holder" x1="0" x2="1"><stop offset="0" stop-color="#8378b4"/><stop offset="0.3" stop-color="#a297d4"/><stop offset="0.7" stop-color="#a297d4"/><stop offset="1" stop-color="#7c72aa"/></linearGradient>
                    <linearGradient id="hole" x1="0" x2="1"><stop offset="0" stop-color="#c89a08"/><stop offset="0.4" stop-color="#f2c408"/><stop offset="0.7" stop-color="#f0c008"/><stop offset="1" stop-color="#d0a008"/></linearGradient>
                    <g id="key"><path d="M-14 4c-3-7 8-13 17-13 8 0 13 5 11 10z" fill="#a58008"/><path d="M-13 3c0-6 6-11 14-11 7 0 12 3 12 6 0 6-7 11-16 11-6 0-10-2-10-6z" fill="url(#hole)"/></g>
                    <g id="slot"><path d="M-10 4l3-6 13-5 4 2-3 6-12 5z" fill="#f2c20c"/><path d="M-7 4l3-6 9-3 3 1-3 6-8 3z" fill="#b80804"/></g>
                </defs>
                <!-- stock plate -->
                <path d="M488 426l38-18L1088 456l50 25-257 133z" fill="#c59d08"/>
                <path d="M488 426L526 408v28l340 155 15 23z" fill="#d0a60a"/>
                <path d="M488 427l393 187 257-133" fill="none" stroke="#d02c08"/>
                <!-- housing walls -->
                <path d="M524 388v46L842 587q17 8 36-2l211-112v-28L860 560z" fill="#d7a908"/>
                <path d="M843 568v19q16 7 34-1v-20z" fill="#e6b508"/>
                <path d="M877 571l212-115v17L878 586z" fill="#c99f08"/>
                <path d="M524 388v46l6 3v-42z" fill="#b08a08"/>
                <!-- chamfered outer edge -->
                <path d="M525 394q-1-11 13-18L735 271q20-12 45 0L1078 434q13 9 11 22l-214 117q-16 7-31-2L528 398z" fill="#c79f0a"/>
                <!-- machined face -->
                <path d="M528 391q0-9 12-15L735 271l138 63 210 127L875 566q-16 7-31-2z" fill="url(#cuts)"/>
                <path d="M630 340l36-13 86-42 24 6-78 44-12 4 26 10-12 6-36 6z" fill="url(#redcuts)"/>
                <path d="M658 349l8 6 22-13 76-50-14 4-66 36z" fill="url(#redcuts)" opacity="0.600"/>
                <path d="M538 389l22-10 6 9 20 13-14 8z" fill="url(#redcuts)"/>
                <path d="M735 271q20-12 45 0l109 56-16 8z" fill="#c30603"/>
                <path d="M736 273l137 62 210 126" fill="none" stroke="#eebc14" stroke-width="2"/>
                <path d="M1083 458l-1 6L875 569q-16 7-31-2L529 394" fill="none" stroke="#eebb08" stroke-width="4"/>
                <path d="M1080 462L876 565" stroke="#d4a60c" stroke-width="6" stroke-dasharray="1 2"/>
                <path d="M904 353l14-8M934 369l14-8M962 386l14-8M992 402l14-8M1020 419l14-8M1050 436l14-8" stroke="#dbb210"/>
                <!-- pockets -->
                <path d="M776 293l8 1 28 15-52 30-44 9q-25-5-14-14z" fill="#d2a70c"/>
                <path d="M772 294q7-3 12 1v27l-12 7z" fill="#f5c808"/>
                <path d="M784 294l28 15-20 14-8-2z" fill="#deb00c"/>
                <path d="M563 387q-2-5 68-36 6-2 14 2l62 31q2 5-64 38-8 3-16-1z" fill="#d5a90a"/>
                <path d="M564 384l66-33q7-3 15 2l62 31" fill="none" stroke="#eebe10" stroke-width="3"/>
                <path d="M629 353q7-4 12 0v45h-12z" fill="#f5c608"/>
                <path d="M635 396l31 13-24 13q-8 3-15-1l-20-13z" fill="#c09808"/>
                <path d="M806 517q-1-5 60-35 5-2 11 1l50 31q2 5-57 35-8 3-15-1z" fill="#d5a90a" stroke="#a58008"/>
                <path d="M806 513l59-31q7-3 13 1l49 30" fill="none" stroke="#eebe10" stroke-width="3"/>
                <path d="M866 484q6-3 11 0v28h-11z" fill="#f5c608"/>
                <path d="M871 512l39 17-39 20q-8 3-14-1l-29-18z" fill="#bd9508"/>
                <!-- speaker grille -->
                <path d="M678 442l71-37M690 449l71-37M702 455l71-37M714 462l72-37M727 469l71-37M739 476l71-36" stroke="#eebe14" stroke-width="2"/>
                <use href="#slot" x="753" y="356"/><use href="#slot" x="786" y="339"/><use href="#slot" x="818" y="323"/>
                <!-- keypad -->
                <use href="#key" x="899" y="364"/><use href="#key" x="862" y="384"/><use href="#key" x="825" y="403"/>
                <use href="#key" x="935" y="386"/><use href="#key" x="899" y="405"/><use href="#key" x="862" y="425"/>
                <use href="#key" x="972" y="407"/><use href="#key" x="935" y="427"/><use href="#key" x="899" y="446"/>
                <use href="#key" x="1009" y="430"/><use href="#key" x="972" y="449"/><use href="#key" x="935" y="468"/>
                <!-- cutter -->
                <path d="M944 254h8v126q-4 5-8 0z" fill="#3a2ff0"/>
                <path d="M944 254h2v127h-2z" fill="#2a20b4"/>
                <path d="M901 187h94q-3 10-14 15v33q-2 5-8 15-12 7-25 7t-24-7q-8-8-10-15v-33q-11-5-13-15z" fill="url(#holder)"/>
                <path d="M917 241q30 12 61 0l-5 9q-12 7-25 7t-24-7z" fill="#857aad"/>
            </svg>
        </section>

        <aside class="side-right">
            <div class="side-bar">
                <span class="grip"></span>
                <button class="tool" aria-label="外形"><svg><use href="#r-eq"/></svg></button>
                <button class="tool" aria-label="挖槽"><svg><use href="#r-cut"/></svg></button>
                <button class="tool" aria-label="导入"><svg><use href="#i-open"/></svg></button>
                <button class="tool" aria-label="台阶"><svg><use href="#r-step"/></svg></button>
                <button class="tool" aria-label="圆铣"><svg><use href="#r-ring"/></svg></button>
                <button class="tool" aria-label="流线"><svg><use href="#r-flow"/></svg></button>
                <button class="tool" aria-label="斜面"><svg><use href="#r-ramp"/></svg></button>
                <button class="tool" aria-label="刀具"><svg><use href="#r-tool"/></svg></button>
                <button class="tool" aria-label="着色"><svg><use href="#i-ball"/></svg></button>
                <button class="tool blue" aria-label="线框"><svg><use href="#i-globe"/></svg></button>
            </div>
            <div class="side-bar lower">
                <span class="grip"></span>
                <button class="tool off" aria-label="全部图素"><svg><use href="#q-a"/></svg></button>
                <button class="tool off" aria-label="点"><svg><use href="#q-b"/></svg></button>
                <button class="tool off" aria-label="线"><svg><use href="#q-c"/></svg></button>
                <button class="tool off" aria-label="圆弧"><svg><use href="#q-d"/></svg></button>
                <button class="tool off" aria-label="样条"><svg><use href="#q-e"/></svg></button>
                <button class="tool off" aria-label="曲面"><svg><use href="#q-f"/></svg></button>
                <button class="tool off" aria-label="实体"><svg><use href="#q-g"/></svg></button>
                <button class="tool off" aria-label="网格"><svg><use href="#i-globe"/></svg></button>
                <button class="tool off" aria-label="清除"><svg><use href="#i-no"/></svg></button>
                <span class="hsep"></span>
                <button class="tool off" aria-label="群组"><svg><use href="#q-h"/></svg></button>
                <button class="tool off" aria-label="结果"><svg><use href="#q-h"/></svg></button>
                <span class="hsep"></span>
                <button class="tool off" aria-label="颜色"><svg><use href="#q-i"/></svg></button>
                <button class="tool off" aria-label="图层"><svg><use href="#q-j"/></svg></button>
                <span class="hsep"></span>
                <button class="tool off" aria-label="尺寸"><svg><use href="#q-k"/></svg></button>
            </div>
        </aside>

        <div class="float-bar">
            <div class="float-title"><button aria-label="关闭"><svg viewBox="0 0 12 12"><path d="M3 3l6 6M9 3L3 9" stroke="#fff" stroke-width="2"/></svg></button></div>
            <div class="float-body"><button class="help-btn" aria-label="帮助"><svg><use href="#i-help"/></svg></button></div>
        </div>

        <form class="dialog" role="dialog" aria-labelledby="dialog-title">
            <div class="dialog-title">
                <h2 id="dialog-title">验证</h2>
                <button type="button" aria-label="关闭"><svg viewBox="0 0 16 16"><path d="M3 3l10 10M13 3L3 13" stroke="#fff" stroke-width="2"/></svg></button>
            </div>
            <div class="dialog-body">
                <div class="play-row">
                    <button type="button" class="btn off" aria-label="重新开始"><svg viewBox="0 0 20 16"><path d="M1 1h2v14H1zM11 1v14L4 8zM19 1v14l-7-7z" fill="currentColor"/></svg></button>
                    <button type="button" class="btn off" aria-label="播放"><svg viewBox="0 0 20 16"><path d="M6 1v14l8-7z" fill="currentColor"/></svg></button>
                    <button type="button" class="btn" aria-label="停止"><svg viewBox="0 0 20 16"><path d="M3 1h14v14H3z" fill="#000"/></svg></button>
                    <button type="button" class="btn off" aria-label="单步"><svg viewBox="0 0 20 16"><path d="M3 1h2v14H3zM8 1v14l8-7z" fill="currentColor"/></svg></button>
                    <button type="button" class="btn off" aria-label="快进"><svg viewBox="0 0 20 16"><path d="M2 1v14l8-7zM10 1v14l8-7z" fill="currentColor"/></svg></button>
                </div>
                <div class="tool-modes">
                    <button type="button" class="btn" aria-label="不显示刀具"><svg viewBox="0 0 28 26"><ellipse cx="14" cy="13" rx="12" ry="11" fill="none" stroke="currentColor" stroke-width="2"/><circle cx="14" cy="11" r="4" fill="none" stroke="currentColor" stroke-width="2"/><circle cx="14" cy="15" r="5" fill="none" stroke="currentColor" stroke-width="2"/></svg></button>
                    <button type="button" class="btn" aria-label="显示刀具"><svg viewBox="0 0 28 26"><path d="M9 0h11v26H9z" fill="currentColor"/></svg></button>
                    <button type="button" class="btn" aria-label="显示刀具和夹头"><svg viewBox="0 0 28 26"><path d="M3 0h22v4l-9 9v13h-5V13L3 4z" fill="currentColor"/></svg></button>
                </div>
                <fieldset class="display">
                    <legend>显示控制器</legend>
                    <div class="field"><label for="step">每次手动时的位</label><input id="step" value="1"></div>
                    <div class="field"><label for="redraw">每次重绘时的位</label><input id="redraw" value="1"></div>
                    <div class="quality">
                        <label for="quality">快速</label>
                        <span class="ticked"><span class="ticks"><i></i><i></i><i></i><i></i><i></i></span><input type="range" id="quality" min="0" max="10" value="10" disabled></span>
                        <span>品质</span>
                    </div>
                    <label class="check"><input type="checkbox" checked>在每个刀具路径之后更新</label>
                </fieldset>
                <fieldset class="stops">
                    <legend>停止选项</legend>
                    <label class="check"><input type="checkbox">碰撞停止</label>
                    <label class="check"><input type="checkbox">换刀停止</label>
                    <label class="check"><input type="checkbox">完成每个操作后停止</label>
                </fieldset>
                <label class="check verbose"><input type="checkbox">祥细模式</label>
                <div class="play-row">
                    <button type="button" class="btn off" aria-label="配置"><svg viewBox="0 0 20 16"><path d="M1 3h3V1h3v2h6V1h2v2h4v12H1z" fill="currentColor"/></svg></button>
                    <button type="button" class="btn off" aria-label="剪切"><svg viewBox="0 0 20 16"><path d="M7 9l9-7M7 9l10-1" stroke="currentColor" stroke-width="2"/><circle cx="5" cy="9" r="2" fill="none" stroke="currentColor"/><circle cx="7" cy="13" r="2" fill="none" stroke="currentColor"/></svg></button>
                    <button type="button" class="btn off" aria-label="测量"><svg viewBox="0 0 20 16"><path d="M2 1v13h16V1M6 14V7M10 14V4M14 14V7" fill="none" stroke="currentColor" stroke-width="2"/></svg></button>
                    <button type="button" class="btn off" aria-label="缩放"><svg viewBox="0 0 20 16"><path d="M2 1l16 14M2 15l5-5M13 6l5-5" stroke="currentColor" stroke-width="1.500"/><circle cx="10" cy="8" r="4" fill="none" stroke="currentColor"/></svg></button>
                    <button type="button" class="btn off" aria-label="保存"><svg viewBox="0 0 20 16"><path d="M3 1h15v14H5l-2-2z" fill="currentColor"/><path d="M7 2h6v5H7zM11 9h5v4h-5z" fill="#f3e8e0"/></svg></button>
                </div>
                <div class="speed-row">
                    <button type="button" class="btn" aria-label="慢速"><svg viewBox="0 0 20 20"><circle cx="10" cy="3" r="2"/><path d="M10 5v7M10 12l-4 6M10 12l4 6M5 10l5-4 5 4" stroke="#000" stroke-width="2" fill="none"/></svg></button>
                    <input type="range" min="0" max="10" value="10" aria-label="速度">
                    <button type="button" class="btn" aria-label="快速"><svg viewBox="0 0 20 20"><circle cx="14" cy="3" r="2"/><path d="M12 5l-4 6 4 3-2 4M8 11l-3 4H1M6 7l4-2 4 4h4" stroke="#000" stroke-width="2" fill="none"/><path d="M4 2h6M1 5h4M1 10h5M12 18h5" stroke="#000" stroke-dasharray="2 1"/></svg></button>
                </div>
                <dl class="info">
                    <dt>操作号码<span class="en">:</span></dt><dd class="en">2</dd>
                    <dt>刀具路径<span class="en">:</span></dt><dd>曲面精加工平行铣削</dd>
                    <dt>刀具号码<span class="en">:</span></dt><dd class="en">238</dd>
                    <dt>刀具名称<span class="en">:</span></dt><dd class="en">   4. BALL ENDMILL</dd>
                </dl>
                <input class="percent" aria-label="进度" value="99%" disabled>
                <div class="actions">
                    <button type="button" class="btn" aria-label="确定"><svg viewBox="0 0 20 20"><path d="M1 11l4-2 3 4L16 1h3L9 19H7z" fill="#38c024" stroke="#188010"/></svg></button>
                    <button type="button" class="btn" aria-label="取消"><svg viewBox="0 0 20 20"><path d="M1 4l4-3 5 5 4-5 5 3-4 6 4 6-4 3-5-5-5 5-4-4 5-5z" fill="#f04820" stroke="#a81808"/></svg></button>
                    <button type="button" class="btn" aria-label="帮助"><svg viewBox="0 0 16 16"><use href="#i-help"/></svg></button>
                </div>
            </div>
        </form>

        <svg class="cursor" viewBox="0 0 12 21"><path d="M1 1v16l4-4 3 7 2-1-3-7h5z" fill="#fff" stroke="#000"/></svg>
    </main>

    <footer class="status-bar">
        <button class="en">3D</button>
        <button class="view">屏幕视角</button>
        <button class="narrow">平面</button>
        <label class="en" for="depth">Z</label>
        <span class="combo depth"><input id="depth" value="0.0"><svg viewBox="0 0 12 12"><path d="M2 4l4 4 4-4" fill="none" stroke="currentColor" stroke-width="2"/></svg></span>
        <span class="combo color"><select aria-label="颜色"><option>15</option></select><svg class="solid" viewBox="0 0 12 12"><path d="M2 3h8l-4 8z"/></svg></span>
        <button class="narrow">层别</button>
        <span class="combo level"><select aria-label="层别"><option>1</option></select><svg viewBox="0 0 12 12"><path d="M2 4l4 4 4-4" fill="none" stroke="currentColor" stroke-width="2"/></svg></span>
        <button>属性</button>
        <span class="combo point"><select aria-label="点型"><option>✳</option></select><svg viewBox="0 0 12 12"><path d="M2 4l4 4 4-4" fill="none" stroke="currentColor" stroke-width="2"/></svg></span>
        <span class="combo line"><button class="stroke thick" aria-label="线宽"></button><svg viewBox="0 0 12 12"><path d="M2 4l4 4 4-4" fill="none" stroke="currentColor" stroke-width="2"/></svg></span>
        <span class="combo line"><button class="stroke" aria-label="线型"></button><svg viewBox="0 0 12 12"><path d="M2 4l4 4 4-4" fill="none" stroke="currentColor" stroke-width="2"/></svg></span>
        <button class="en wcs">WCS</button>
        <button class="groups">群组</button>
        <button class="en">!</button>
        <button class="en last">?</button>
    </footer>
    <div class="task-bar"></div>
</body>
</html>
```

FILE: styles.css
```css
* {
    box-sizing: border-box;
}

body {
    display: flex;
    flex-direction: column;
    min-height: 100vh;
    margin: 0;
    overflow: hidden;
    background-color: #f2e7e0;
    color: #000;
    font-family: "Liberation Sans", "Noto Sans CJK SC", sans-serif;
    font-size: 12px;
}

button,
input,
select {
    margin: 0;
    padding: 0;
    border: none;
    border-radius: 0;
    background: none;
    color: inherit;
    font: inherit;
}

select {
    appearance: none;
}

.sprite {
    position: absolute;
    width: 0;
    height: 0;
}

.en {
    font-family: "Liberation Mono", monospace;
    font-size: 10px;
    white-space: pre;
}

.cn {
    font-size: 14px;
}

/* Title bar */
.title-bar {
    display: flex;
    align-items: center;
    height: 26px;
    padding: 0 3px;
    background: linear-gradient(#a6bef8, #8aa2ea 20%, #7f98e2 45%, #87a6f0 80%, #7186d4);
}

.title-bar h1 {
    flex: 1;
    margin: 0 0 0 3px;
    color: #dfe6fa;
    font-family: "Liberation Mono", "Noto Sans CJK SC", monospace;
    font-size: 13px;
    line-height: 20px;
}

.app-icon {
    width: 16px;
    height: 18px;
}

.window-buttons {
    display: flex;
    gap: 4px;
}

.window-buttons button {
    width: 20px;
    height: 20px;
    padding: 1px;
    border: 1px solid #c8d4f8;
    border-radius: 3px;
    background-color: #4a6ee0;
}

.window-buttons .close,
.float-title button {
    background-color: #b9686e;
}

.window-buttons svg {
    display: block;
}

/* Menu */
.menu-bar {
    display: flex;
    gap: 12px;
    height: 21px;
    padding: 0 5px;
    border-bottom: 1px solid #b3a9a2;
    line-height: 20px;
}

.menu-bar a {
    color: #a2968e;
    text-decoration: none;
    white-space: nowrap;
}

/* Toolbars */
.tool-row {
    display: flex;
    height: 30px;
    padding-left: 1px;
}

.bar {
    position: relative;
    display: flex;
    align-items: center;
    padding: 0 4px 0 10px;
    border-top: 1px solid #fff;
    border-right: 1px solid #a79d97;
    border-bottom: 1px solid #b3a9a2;
}

.bar::before {
    content: "";
    position: absolute;
    left: 5px;
    top: 5px;
    bottom: 5px;
    border-left: 2px dotted #b3a9a2;
}

.tool {
    display: flex;
    flex-shrink: 0;
    align-items: center;
    width: 23px;
    height: 22px;
    padding-left: 3px;
}

.tool svg {
    flex-shrink: 0;
    width: 16px;
    height: 16px;
}

.tool svg.wide {
    width: 20px;
    height: 18px;
}

.tool.drop {
    width: 36px;
}

.tool.drop::after {
    content: "";
    margin-left: 6px;
    border: 3px solid transparent;
    border-top-color: #000;
    border-bottom: none;
}

.off {
    color: #aca29b;
}

.tool.off::after {
    border-top-color: #c9bfb8;
}

.blue {
    color: #1c62b0;
}

.sep {
    width: 1px;
    height: 22px;
    margin: 0 4px 0 3px;
    background-color: #cfc4bc;
}

.stub {
    width: 16px;
    height: 8px;
    margin-left: 16px;
    border: 1px solid #b3a9a2;
    border-top: none;
}

/* Coordinate and selection ribbon */
.ribbon-row {
    display: flex;
    height: 28px;
    border-bottom: 1px solid #9b928c;
}

.ribbon {
    display: flex;
    align-items: center;
    background-color: #fffbd8;
    border-right: 1px solid #a79d97;
}

.ribbon .tool {
    background-color: #f3e8e0;
}

.coords {
    padding: 0 8px 0 4px;
}

.axis {
    width: 20px;
    height: 19px;
    border: 1px solid #d3c8c0;
    background-color: #f5ede8;
    font-family: "Liberation Mono", monospace;
    text-decoration: underline;
}

.coord {
    width: 72px;
    height: 19px;
    margin: 0 13px 0 6px;
    border: 1px solid #cfc4bc;
    background-color: #f3e8e0;
    font-family: "Liberation Mono", monospace;
}

.coord-z,
.window-mode {
    width: 72px;
    height: 19px;
    border: 1px solid #d9cec6;
    background-color: #f3e8e0;
    color: #c9c2cc;
}

.coord-z {
    margin: 0 6px;
    font-family: "Liberation Mono", monospace;
}

.window-mode {
    margin: 0 8px 0 5px;
}

.help-btn {
    display: flex;
    align-items: center;
    justify-content: center;
    width: 22px;
    height: 20px;
    border: 1px solid #33425c;
    border-radius: 3px;
    background-color: #f6f3f4;
}

.coords .help-btn {
    margin-left: 4px;
}

.help-btn svg {
    width: 16px;
    height: 16px;
}

.ribbon-gap {
    width: 82px;
    border-right: 1px solid #a79d97;
}

.select {
    padding: 0 5px 0 8px;
}

.pick {
    width: 45px;
    height: 19px;
    margin-right: 10px;
    border: 1px solid #d3c8c0;
    background-color: #faf4f1;
    text-align: left;
    white-space: nowrap;
}

.select .tool {
    width: 24px;
}

.select .tool.drop {
    width: 38px;
}

.chunk {
    display: flex;
    margin-right: 7px;
}

.combo {
    display: flex;
    align-items: center;
}

.combo input,
.combo select,
.combo .stroke {
    flex: 1;
    width: 0;
    height: 100%;
    color: #000;
}

.combo svg {
    width: 14px;
    height: 15px;
    margin: 0 1px;
    padding: 1px;
    background-color: #efe6ea;
    pointer-events: none;
}

/* Workspace */
.workspace {
    position: relative;
    display: flex;
    flex: 1;
    min-height: 608px;
}

.side-left {
    width: 41px;
    background-color: #f5eef3;
}

.side-right {
    width: 32px;
    border-left: 3px solid #faf4f2;
}

.side-bar {
    display: flex;
    flex-direction: column;
    padding: 4px 0 2px 2px;
    border-bottom: 1px solid #b3a9a2;
    background-color: #f3e8e0;
}

.side-left .side-bar,
.lower {
    padding-top: 6px;
}

.grip {
    width: 20px;
    height: 2px;
    margin: 0 0 4px 3px;
    border-top: 2px dotted #b3a9a2;
}

.hsep {
    height: 1px;
    margin: 4px 3px;
    background-color: #b3a9a2;
}

/* Operations manager */
.manager {
    display: flex;
    flex-direction: column;
    width: 288px;
    padding: 52px 5px 5px 4px;
    border-right: 2px solid #8f8782;
    border-left: 1px solid #a79d97;
    background-color: #f3e8e0;
}

.manager-tools {
    display: flex;
    height: 22px;
    padding-left: 206px;
    border-bottom: 1px solid #b3a9a2;
}

.manager-tools .tool {
    height: 14px;
}

.second {
    align-items: center;
    height: 36px;
    padding: 0 0 6px 202px;
    border-bottom: none;
}

.tree {
    display: flex;
    flex: 1;
    flex-direction: column;
    border: 1px solid #9aa0b0;
    background-color: #fff;
}

.tree ul {
    flex: 1;
    margin: 0;
    padding: 160px 0 0 203px;
    overflow: hidden;
    list-style: none;
}

.tree li {
    height: 16px;
    line-height: 16px;
    white-space: nowrap;
}

.tree .selected {
    background-color: #2f5fc4;
    color: #fff;
}

.scroll-row {
    display: flex;
    justify-content: flex-end;
    padding: 2px 1px 4px;
    background-color: #f8f4f6;
}

.scroll-row button {
    width: 16px;
    height: 14px;
    border-radius: 2px;
    background-color: #c4d2f6;
}

.scroll-row svg {
    display: block;
    width: 14px;
    height: 14px;
}

.viewport {
    flex: 1;
    min-width: 0;
    background-color: #000;
}

.scene {
    display: block;
    width: 100%;
    height: 100%;
}

/* Floating ribbon over the viewport */
.float-bar {
    position: absolute;
    top: 2px;
    right: 59px;
    left: 200px;
    border: 3px solid #6a74d8;
    border-top: none;
    background-color: #fff;
}

.float-title {
    display: flex;
    align-items: center;
    justify-content: flex-end;
    height: 21px;
    padding-right: 2px;
    background: linear-gradient(#6a7fd8, #7f98e4 40%, #86a0ea);
}

.float-title button {
    width: 13px;
    height: 13px;
    border: 1px solid #e0d8f0;
}

.float-title svg {
    display: block;
}

.float-body {
    display: flex;
    justify-content: flex-end;
    padding: 4px 51px 2px 0;
}

/* Verify dialog */
.dialog {
    position: absolute;
    top: -15px;
    left: 34px;
    width: 221px;
    border: 3px solid #0a3fd0;
    border-top: none;
    border-radius: 6px 6px 0 0;
    background-color: #f3e8e0;
}

.dialog-title {
    display: flex;
    align-items: center;
    justify-content: space-between;
    height: 28px;
    margin: 0 -3px;
    padding: 0 5px 0 7px;
    border-radius: 6px 6px 0 0;
    background: linear-gradient(#0a50e0, #2a78fa 12%, #0055e8 35%, #0058f0 80%, #0044c8);
}

.dialog-title h2 {
    margin: 0;
    color: #fff;
    font-size: 13px;
}

.dialog-title button {
    width: 21px;
    height: 21px;
    padding: 2px;
    border: 1px solid #f0d8d8;
    border-radius: 3px;
    background-color: #d6503a;
}

.dialog-title svg {
    display: block;
}

.dialog-body {
    display: flex;
    flex-direction: column;
    padding: 12px 10px 18px 11px;
}

.play-row,
.speed-row {
    display: flex;
    justify-content: space-between;
    padding: 0 9px 0 7px;
}

.btn {
    display: flex;
    align-items: center;
    justify-content: center;
    width: 28px;
    height: 25px;
    border: 1px solid #1f3f68;
    border-radius: 3px;
    background-color: #faf8f8;
}

.btn svg {
    width: 20px;
    height: 16px;
}

.btn.off {
    border-color: #d0c5bd;
    background-color: #f3e8e0;
}

.tool-modes {
    display: flex;
    justify-content: center;
    gap: 7px;
    margin: 11px 0 5px;
}

.tool-modes .btn {
    width: 31px;
    height: 28px;
    color: #aba29c;
}

.tool-modes svg {
    width: 28px;
    height: 26px;
}

fieldset {
    min-width: 0;
    margin: 0;
    padding: 0 5px;
    border: 1px solid #d6cbc2;
    border-radius: 4px;
}

legend {
    padding: 0 3px;
    color: #1d46b0;
    line-height: 13px;
}

.display {
    height: 136px;
}

.display legend {
    margin-bottom: 3px;
}

.field {
    display: flex;
    justify-content: flex-end;
    gap: 15px;
    margin: 3px 5px 0 0;
    line-height: 19px;
}

.field input {
    width: 60px;
    height: 21px;
    padding: 0 2px;
    border: 1px solid #9a9690;
    background-color: #ffff84;
    font-family: "Liberation Mono", monospace;
    font-size: 12px;
}

.quality {
    display: flex;
    gap: 10px;
    height: 41px;
    padding: 9px 8px 0;
    color: #aca29b;
    line-height: 28px;
}

.ticked {
    width: 84px;
    padding-left: 16px;
}

.ticks {
    display: flex;
    justify-content: space-between;
    height: 4px;
    margin-bottom: 2px;
    padding: 0 5px;
}

.ticks i {
    width: 1px;
    background-color: #b8aca4;
}

.quality .ticked + span {
    line-height: 24px;
}

input[type="range"] {
    appearance: none;
    display: block;
    width: 68px;
    height: 20px;
    background: linear-gradient(#aca29b, #aca29b) center / 100% 1px no-repeat;
}

input[type="range"]::-webkit-slider-thumb {
    appearance: none;
    width: 11px;
    height: 21px;
    border: 1px solid #b8aca4;
    border-radius: 2px;
    background-color: #fbf5f2;
}

.speed-row input[type="range"] {
    width: 78px;
    height: 23px;
}

.speed-row input[type="range"]::-webkit-slider-thumb {
    border: 2px solid #2f9a58;
    border-right-color: #6d8a78;
    background-color: #fff;
}

.check {
    display: flex;
    align-items: center;
    gap: 3px;
    height: 21px;
}

.check input {
    appearance: none;
    width: 13px;
    height: 13px;
    border: 1px solid #33526e;
    background-color: #fbf9fa;
}

.check input:checked::after {
    content: "";
    display: block;
    width: 7px;
    height: 3px;
    margin: 2px;
    border-bottom: 2px solid #2c9a28;
    border-left: 2px solid #2c9a28;
    transform: rotate(-45deg);
}

.display .check {
    margin-top: 5px;
}

.stops {
    height: 90px;
    margin-top: 7px;
}

.stops legend {
    margin-bottom: 5px;
}

.verbose {
    margin: 5px 0 7px 6px;
}

.speed-row {
    align-items: center;
    margin: 15px 0 12px;
}

.speed-row svg {
    width: 20px;
    height: 20px;
}

.info {
    display: grid;
    grid-template-columns: 67px 1fr;
    grid-auto-rows: 18px;
    margin: 0 0 9px;
    padding: 1px 4px 3px 5px;
    border: 1px solid #d6cbc2;
    border-radius: 4px;
    line-height: 18px;
    white-space: nowrap;
}

.info dd {
    margin: 0;
}

.percent {
    align-self: center;
    width: 43px;
    height: 22px;
    padding: 0 2px;
    border: 1px solid #aca29b;
    color: #aca29b;
    font-family: "Liberation Mono", monospace;
    font-size: 10px;
    text-align: right;
}

.actions {
    display: flex;
    justify-content: center;
    gap: 8px;
    margin-top: 7px;
}

.actions .btn {
    width: 52px;
}

.actions svg {
    width: 20px;
    height: 20px;
}

.cursor {
    position: absolute;
    top: 177px;
    left: 287px;
    width: 12px;
    height: 21px;
}

/* Status bar */
.status-bar {
    display: flex;
    align-items: center;
    justify-content: flex-end;
    gap: 6px;
    height: 27px;
    border-top: 2px solid #8f8782;
    background-color: #f3e8e0;
}

.status-bar > button {
    height: 19px;
    padding: 0 5px;
    border: 1px solid #dcd1c9;
    border-radius: 2px;
    white-space: nowrap;
}

.status-bar .narrow {
    padding: 0 1px;
}

.status-bar .view {
    width: 65px;
}

.status-bar .last {
    width: 16px;
    border-right: none;
}

.status-bar .combo {
    height: 20px;
    border: 1px solid #98a0b4;
    background-color: #fff;
    font-family: "Liberation Mono", monospace;
    font-size: 10px;
}

.status-bar .combo svg {
    background-color: #c4d2f6;
    color: #3b5a9a;
}

.status-bar .combo .solid {
    background-color: #f3e8e0;
}

.status-bar .depth {
    width: 112px;
    background-color: #ffff84;
}

.depth input {
    padding-left: 2px;
    background: linear-gradient(90deg, #2f5fc4 21px, transparent 21px);
}

.status-bar .depth input {
    color: #fff;
}

.status-bar .color {
    width: 69px;
}

.color select {
    padding-left: 24px;
}

.level {
    width: 148px;
    margin-left: -3px;
}

.point {
    width: 33px;
}

.line {
    width: 63px;
}

.combo .stroke::before {
    content: "";
    display: block;
    margin: 0 2px;
    border-top: 1px solid #000;
}

.combo .thick::before {
    border-top-width: 3px;
}

.status-bar .wcs {
    width: 45px;
}

.status-bar .groups {
    width: 50px;
}

.task-bar {
    height: 2px;
    background: linear-gradient(90deg, #3a8a3c 93px, #2a62d8 93px);
}
```
